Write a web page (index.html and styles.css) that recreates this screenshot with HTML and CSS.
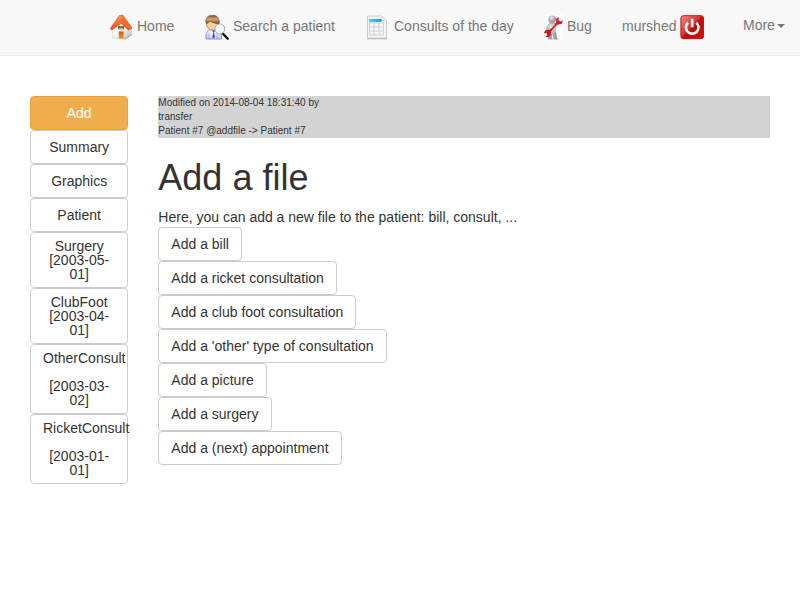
FILE: index.html
```html
<!DOCTYPE html>
<html lang="en">
<head>
<meta charset="utf-8">
<title>Add a file</title>
<link rel="stylesheet" href="styles.css">
</head>
<body>
<svg class="defs" width="0" height="0">
  <defs>
    <linearGradient id="roof" x1="0" y1="0" x2="0" y2="1"><stop offset="0" stop-color="#ff9650"/><stop offset="1" stop-color="#e4501a"/></linearGradient>
    <linearGradient id="wall" x1="0" y1="0" x2="1" y2="1"><stop offset="0" stop-color="#fff"/><stop offset=".5" stop-color="#f4f4f2"/><stop offset="1" stop-color="#b5b5b2"/></linearGradient>
    <linearGradient id="door" x1="0" y1="0" x2="0" y2="1"><stop offset="0" stop-color="#ce5612"/><stop offset="1" stop-color="#f99a3c"/></linearGradient>
    <linearGradient id="hair" x1="0" y1="0" x2="0" y2="1"><stop offset="0" stop-color="#7d4a1c"/><stop offset=".45" stop-color="#cfa97f"/><stop offset="1" stop-color="#7a4617"/></linearGradient>
    <linearGradient id="shirt" x1="0" y1="0" x2="0" y2="1"><stop offset="0" stop-color="#fff"/><stop offset="1" stop-color="#c3cbf5"/></linearGradient>
    <linearGradient id="head" x1="0" y1="0" x2="1" y2="0"><stop offset="0" stop-color="#58cdf7"/><stop offset="1" stop-color="#1b9be2"/></linearGradient>
    <radialGradient id="skin" cx=".4" cy=".3"><stop offset="0" stop-color="#ececec"/><stop offset="1" stop-color="#a0a0a0"/></radialGradient>
    <linearGradient id="power" x1="0" y1="0" x2="1" y2="1"><stop offset="0" stop-color="#ee9089"/><stop offset=".46" stop-color="#d63333"/><stop offset=".52" stop-color="#bd0c0c"/><stop offset="1" stop-color="#dc1010"/></linearGradient>
  </defs>
</svg>
<nav class="navbar">
  <a class="nav-link home">
    <svg class="icon" width="24" height="26" viewBox="0 0 24 26">
      <path d="M3.500 14 11.500 6 19.500 11 22.500 15.500V21l-6.500 4.300-12-1.300z" fill="url(#wall)" stroke="#cac9c6" stroke-width=".6"/>
      <path d="M16 25 22.500 20.800" stroke="#999" stroke-width=".8"/>
      <path d="M10.500 1.500 14 1.300 23 14 19.500 16 12 9.500 2.800 16 1.200 14.500Z" fill="url(#roof)" stroke="#cf4515" stroke-width=".6"/>
      <path d="M13.500 2 22.500 14 19.500 15 12 8.500Z" fill="#f56a2a"/>
      <path d="M9 12.200h6v3h-6z" fill="#6b5243"/><path d="M10 13.800h4v1h-4z" fill="#efb892"/>
      <path d="M9.800 17.500h4.800v7.600l-4.800-.6z" fill="url(#door)"/>
    </svg>
    Home</a>
  <a class="nav-link search">
    <svg class="icon" width="25" height="26" viewBox="0 0 25 26">
      <path d="M2 25C1.500 19.500 3 16 7 15.500h6c3.500 1 5 4 4.500 9.500Z" fill="url(#shirt)" stroke="#7278c4" stroke-width=".8"/>
      <path d="M5 18.500V25M13 19.500V25" stroke="#98a0dc" stroke-width=".6"/>
      <path d="m7.500 16.500 2 1.500-1 5 1 1.500 1.200-1.500-.7-5 1.500-2z" fill="#3437aa"/>
      <ellipse cx="8.800" cy="9.700" rx="6.400" ry="6.500" fill="#fbcf98" stroke="#b97e45" stroke-width=".8"/>
      <path d="M2.200 9.500C1 4 4 1.300 8.500 1.300S16 4 15 9.700C11 9.500 7.500 8.500 6 7 5.200 8.800 3.700 9.300 2.200 9.500Z" fill="url(#hair)" stroke="#7b4a20" stroke-width=".6"/>
      <path d="m18.800 19.500 4.900 5.200" stroke="#111" stroke-width="2.400" stroke-linecap="round"/>
      <circle cx="15.800" cy="14.900" r="5" fill="#eff6f6" stroke="#a4aaac"/>
      <path d="M13 13.800q1-2 3-2" fill="none" stroke="#fff" stroke-width="1.200"/>
    </svg>
    Search a patient</a>
  <a class="nav-link consults">
    <svg class="icon" width="25" height="26" viewBox="0 0 25 26">
      <path d="M2.500 2h14L21.500 6.500V24h-19z" fill="#f4f5f6" stroke="#c9cccd"/>
      <path d="M2 24.800h20" stroke="#aaa" stroke-width=".8"/>
      <path d="M4.500 9h14M4.500 13h14M4.500 17h14M4.500 21h14M4.500 8v13M9 8v13M14 8v13M18.500 8v13" stroke="#c8cccd" stroke-width=".8"/>
      <path d="M16.800 2v4.500h4.700z" fill="#fff" stroke="#c9cccd" stroke-width=".6"/>
      <path d="M4 5h12.500v3H4z" fill="url(#head)"/>
    </svg>
    Consults of the day</a>
  <a class="nav-link bug">
    <svg class="icon" width="19" height="26" viewBox="0 0 19 26">
      <path d="M0 1h19v25H0z" fill="#fff"/>
      <ellipse cx="9.500" cy="25" rx="6.500" ry=".8" fill="#ccc"/>
      <path d="M5 9.500Q8 8 11 9l3-.5 1 1.500-3.500 2.500V17l2 8H9.800L8.500 19l-1 6H4.500l1-8V14L4 18l-2-.7L3 12Z" fill="url(#skin)" stroke="#999" stroke-width=".3"/>
      <circle cx="8.200" cy="5.300" r="3.900" fill="url(#skin)"/>
      <path d="m5 18 3-3M12 10.500l2-2" stroke="#c81e22" stroke-width="2.300"/>
      <path d="m7.500 15.500 5-5.500" stroke="#c81e22" stroke-width="1.500"/>
      <path d="M14.500 2.800 12 5l.3 3.800L15 10.500l3-.8.900-3.500-2.400 1.400-1.800-1.100z" fill="#d62327"/>
      <path d="M1 16.500 4.500 15.500 7 17.500v3L4.500 23.300 1.500 22.800 3.300 21 2.600 19 0 19.500z" fill="#c61b1f"/>
    </svg><span class="bug-text">Bug</span></a>
  <a class="nav-link user">murshed
    <svg class="icon" width="25" height="26" viewBox="0 0 25 26">
      <rect x=".9" y="1.700" width="22.600" height="23" rx="2.500" fill="url(#power)" stroke="#b9191b"/>
      <path d="M8 8.700a6.300 6.300 0 1 0 8.400 0" fill="none" stroke="#fff" stroke-width="2.600"/>
      <path d="M12.200 4.800v8.500" stroke="#fff" stroke-width="2.600"/>
    </svg></a>
  <a class="nav-link more">More<span class="caret"></span></a>
</nav>
<div class="layout">
  <aside class="sidebar">
    <a class="btn btn-warning">Add</a>
    <a class="btn">Summary</a>
    <a class="btn">Graphics</a>
    <a class="btn">Patient</a>
    <a class="btn multi">Surgery<br>[2003-05-01]</a>
    <a class="btn multi">ClubFoot<br>[2003-04-01]</a>
    <a class="btn multi">OtherConsult<br><br>[2003-03-02]</a>
    <a class="btn multi">RicketConsult<br><br>[2003-01-01]</a>
  </aside>
  <main class="content">
    <div class="modified">Modified on 2014-08-04 18:31:40 by<br>transfer<br>Patient #7 @addfile -&gt; Patient #7</div>
    <h1>Add a file</h1>
    <div>Here, you can add a new file to the patient: bill, consult, ...</div>
    <div class="actions">
      <a class="btn">Add a bill</a>
      <a class="btn">Add a ricket consultation</a>
      <a class="btn">Add a club foot consultation</a>
      <a class="btn">Add a 'other' type of consultation</a>
      <a class="btn">Add a picture</a>
      <a class="btn">Add a surgery</a>
      <a class="btn">Add a (next) appointment</a>
    </div>
  </main>
</div>
</body>
</html>
```
FILE: styles.css
```css
* { box-sizing: border-box; }
body {
  margin: 0;
  font: 14px/20px "Liberation Sans", Arial, sans-serif;
  color: #333;
  background: #fff;
}
.defs { display: block; }
.navbar {
  display: flex;
  align-items: flex-start;
  height: 56px;
  padding-left: 94px;
  background: #f8f8f8;
  border-bottom: 1px solid #e7e7e7;
}
.nav-link {
  display: flex;
  align-items: flex-start;
  gap: 4px;
  height: 26px;
  margin-top: 14px;
  padding: 0 15px;
  line-height: 24px;
  color: #777;
  white-space: nowrap;
}
.nav-link .icon { flex: none; }
.home { width: 95px; }
.search { width: 161px; }
.consults { width: 179px; }
.bug { width: 78px; }
.user { width: 121px; }
.more {
  align-items: center;
  height: 26px;
  margin-top: 13px;
  gap: 2px;
  line-height: 26px;
  position: relative;
  top: -1px;
}
.caret {
  margin-top: 2px;
  border-top: 4px solid #777;
  border-left: 4px solid transparent;
  border-right: 4px solid transparent;
}
.layout {
  display: flex;
  gap: 30px;
  padding: 40px 30px 0;
}
.sidebar {
  display: flex;
  flex-direction: column;
  width: 98.33px;
  flex: none;
}
.content { flex: 1; }
.btn {
  padding: 6px 12px;
  border: 1px solid #ccc;
  border-radius: 4px;
  background: #fff;
  text-align: center;
}
.btn-warning {
  color: #fff;
  background: #f0ad4e;
  border-color: #eea236;
}
.multi { line-height: 14px; }
.modified {
  height: 42px;
  background: #d3d3d3;
  font-size: 10px;
  line-height: 14px;
}
h1 {
  margin: 20px 0 10px;
  font-size: 36px;
  font-weight: 500;
  line-height: 39px;
}
.actions {
  display: flex;
  flex-direction: column;
  align-items: flex-start;
}
```
